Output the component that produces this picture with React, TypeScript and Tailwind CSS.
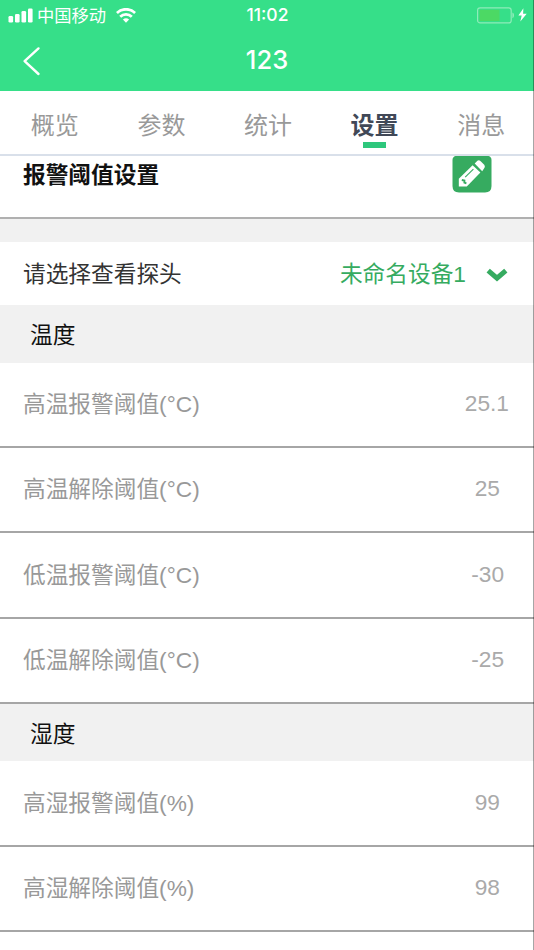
import React from 'react';

const tabs = ['概览', '参数', '统计', '设置', '消息'];

const temperature = [
  { label: '高温报警阈值(°C)', value: '25.1', height: 'h-[85px]', pad: 'pr-[25px]' },
  { label: '高温解除阈值(°C)', value: '25', height: 'h-[85px]', pad: 'pr-[34px]' },
  { label: '低温报警阈值(°C)', value: '-30', height: 'h-[86px]', pad: 'pr-[30px]' },
  { label: '低温解除阈值(°C)', value: '-25', height: 'h-[85px]', pad: 'pr-[30px]' },
];

const humidity = [
  { label: '高湿报警阈值(%)', value: '99', height: 'h-[86px]', pad: 'pr-[34px]' },
  { label: '高湿解除阈值(%)', value: '98', height: 'h-[85px]', pad: 'pr-[34px]' },
];

const StatusBar = () => (
  <div className="flex h-[30px] items-center justify-between pl-2 pr-[7px]">
    <div className="flex w-[150px] items-center">
      <svg className="mt-px" width="26" height="15" viewBox="0 0 26 15" fill="#fff">
        <rect x="0.5" y="8" width="4.6" height="6.5" rx="1.3" />
        <rect x="7" y="6" width="4.6" height="8.5" rx="1.3" />
        <rect x="13.5" y="3" width="4.6" height="11.5" rx="1.3" />
        <rect x="20" y="0.5" width="4.6" height="14" rx="1.3" />
      </svg>
      <span className="ml-[3px] pt-0.5 text-[17.3px] leading-[28px]">中国移动</span>
      <svg className="ml-2.5" width="20" height="15" viewBox="0 0 20 15" fill="none" stroke="#fff" strokeWidth="2.8">
        <path d="M0.9 5a13 13 0 0 1 18.2 0" />
        <path d="M4.2 8.7a8.3 8.3 0 0 1 11.6 0" />
        <path d="M6.9 11.6a4.6 4.6 0 0 1 6.2 0L10 14.7z" fill="#fff" stroke="none" />
      </svg>
    </div>
    <span className="font-['Inter'] text-[17.5px] font-medium leading-[30px]">11:02</span>
    <div className="flex w-[150px] items-center justify-end">
      <svg width="38" height="17" viewBox="0 0 38 17">
        <rect x="0.6" y="0.9" width="33.6" height="15" rx="2.5" fill="none" stroke="#8eecb9" strokeWidth="1.2" />
        <rect x="2.5" y="2.8" width="20" height="11.2" fill="#4cd964" />
        <path d="M35.4 5.6c2.2.8 2.2 4.8 0 5.6z" fill="#8eecb9" />
      </svg>
      <svg className="ml-[3px]" width="9" height="14" viewBox="0 0 9 14" fill="#fff">
        <path d="M5.4.3.4 7.6h3.3L2.3 13.5 8.7 5.7H5.1z" />
      </svg>
    </div>
  </div>
);

const NavBar = () => (
  <div className="flex h-[61px] items-center justify-between px-[22px]">
    <svg width="20" height="30" viewBox="0 0 20 30" fill="none" stroke="#fff" strokeWidth="2.4" strokeLinecap="round" strokeLinejoin="round">
      <path d="M16.5 2.4 2.6 15.2 16.5 28" />
    </svg>
    <h1 className="font-['Inter'] text-[25.5px] font-medium">123</h1>
    <span className="w-5" />
  </div>
);

const TabBar = () => (
  <div className="flex h-[65px] border-b-2 border-[#d9e0ea] pl-px">
    {tabs.map((tab) => (
      <div key={tab} className="flex flex-1 flex-col items-center pt-[18px]">
        <span className={tab === '设置' ? 'pl-px text-2xl font-bold leading-[33px] text-[#414857]' : 'pl-px text-2xl leading-[33px] text-[#999]'}>{tab}</span>
        {tab === '设置' && <span className="h-1.5 w-[23px] bg-[#2ec77c]" />}
      </div>
    ))}
  </div>
);

const PencilIcon = () => (
  <svg width="40" height="37" viewBox="0 0 40 37">
    <path d="M3.5 0h33Q39.5.8 39.5 4v26q0 6.5-6.5 6.5H7Q.5 36.5.5 30V4Q.5.8 3.5 0z" fill="#36ab60" />
    <g fill="#fff">
      <path d="M20.6 9.2 28.4 16.6 14.8 30.6H6.8v-7.8z" />
      <path d="m22.7 7.5 2.7-2.7q1.5-1.2 3 .2l3.8 3.8q1.2 1.4.3 3l-2.3 3.4z" />
    </g>
    <path d="m13.2 21.2 8.2-8" stroke="#36ab60" strokeWidth="1.1" />
    <path d="m9.8 24 2.6.6v2l2 .8" stroke="#36ab60" strokeWidth="1.9" fill="none" />
  </svg>
);

const SectionTitle = ({ title, height }: { title: string; height: string }) => (
  <div className={`bg-[#f1f1f1] pl-[30px] pt-0.5 text-[22.7px] leading-[57px] text-[#111] ${height}`}>{title}</div>
);

type RowProps = { label: string; value: string; height: string; pad: string };

const Row = ({ label, value, height, pad }: RowProps) => (
  <div className={`flex items-center justify-between border-b-2 border-[#a6a6a6] pl-[23px] ${height} ${pad}`}>
    <span className="text-[22.7px] text-[#999]">{label}</span>
    <span className="pb-0.5 font-['Liberation_Sans'] text-[22.7px] text-[#aaa]">{value}</span>
  </div>
);

export default function App() {
  return (
    <div className="relative h-[950px] w-[534px] overflow-hidden bg-white font-['Liberation_Sans','Noto_Sans_CJK_SC',sans-serif]">
      <header className="h-[91px] bg-[#36df89] text-white">
        <StatusBar />
        <NavBar />
      </header>
      <TabBar />
      <div className="flex h-[63px] items-start justify-between border-b-2 border-[#b0b0b0] pl-[23px] pr-[42px]">
        <h2 className="pt-px text-[22.7px] font-bold leading-9 text-[#111]">报警阈值设置</h2>
        <PencilIcon />
      </div>
      <div className="h-[23px] bg-[#f1f1f1]" />
      <div className="flex h-[63px] items-center justify-between pl-[23px] pr-[26px] pt-0.5">
        <span className="text-[22.7px] text-[#333]">请选择查看探头</span>
        <div className="flex items-center gap-5 text-[22.7px] text-[#36ab60]">
          未命名设备1
          <svg className="mt-0.5" width="22" height="14" viewBox="0 0 22 14" fill="none" stroke="#36ab60" strokeWidth="5">
            <path d="m2.2 2.6 8.8 7.6 8.8-7.6" />
          </svg>
        </div>
      </div>
      <SectionTitle title="温度" height="h-[58px]" />
      {temperature.map((row) => (
        <Row key={row.label} {...row} />
      ))}
      <SectionTitle title="湿度" height="h-[57px]" />
      {humidity.map((row) => (
        <Row key={row.label} {...row} />
      ))}
      {/* thin edge down the right side of the screen */}
      <div className="absolute inset-y-0 right-0 w-px bg-black/35" />
    </div>
  );
}
